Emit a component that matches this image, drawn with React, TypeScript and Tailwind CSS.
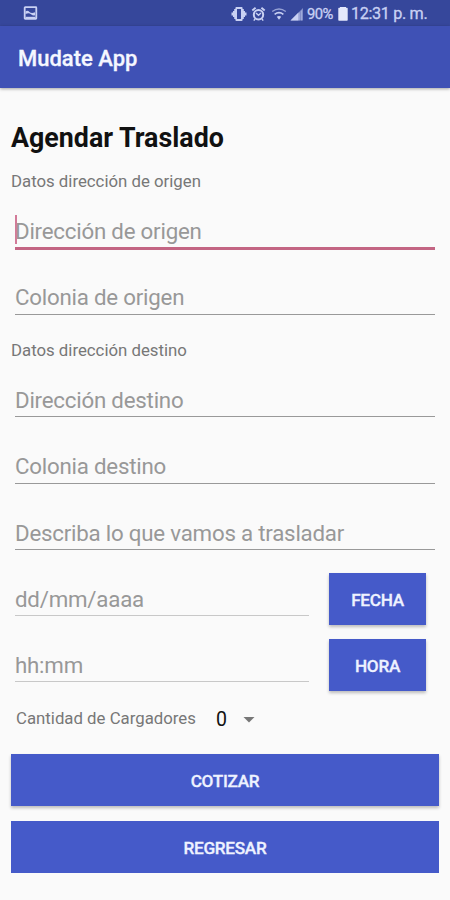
import type { ReactNode } from 'react';

function StatusBar() {
  return (
    <div className="flex h-[26px] items-center bg-[#36479b] pl-[23px] text-[#c9d1f3]">
      <svg width="15" height="14" viewBox="0 0 15 14" fill="none" stroke="currentColor">
        <rect x="1.7" y="1.2" width="11.6" height="11.6" rx="0.5" strokeWidth="1.8" />
        <path d="M2.500 5.500q2-1.500 4 .5t5.500.3v3q-2 .8-4-1T2.500 8Z" fill="currentColor" stroke="none" />
        <path d="M2.500 11.500h10" strokeWidth="1.4" />
      </svg>
      <svg className="mt-[1px] ml-[193px]" width="16" height="16" viewBox="0 0 16 16" fill="currentColor">
        <path fillRule="evenodd" d="M5.4 1h5.2q1 0 1 1v1h1.2v2H14v1.5h1.5v3H14V11h-1.2v2h-1.2v1q0 1-1 1H5.4q-1 0-1-1v-1H3.2v-2H2V9.500H.5v-3H2V5h1.200V3h1.200V2q0-1 1-1ZM6 3v10h4V3Z" />
      </svg>
      <svg className="mt-[1px] ml-[4px]" width="15" height="16" viewBox="0 0 15 16" fill="none" stroke="currentColor">
        <circle cx="7.500" cy="8.700" r="4.700" strokeWidth="2" />
        <path d="M1.300 4.500 4.600 1.700M13.700 4.500l-3.300-2.800" strokeWidth="1.900" />
        <path d="m5 7 2.500 2.200L10 7M4 13l-1.200 1.700M11 13l1.200 1.700" strokeWidth="1.400" />
      </svg>
      <svg className="mt-[2px] ml-[5px]" width="16" height="14" viewBox="0 0 16 14" fill="none" stroke="currentColor">
        <path d="M1.200 4.500q6.800-5 13.600 0" strokeWidth="1.500" opacity=".65" />
        <path d="M3.600 7.300q4.400-3.300 8.800 0" strokeWidth="1.600" />
        <path d="M5.800 9.800Q8 8.300 10.200 9.800L8 12.800Z" fill="currentColor" stroke="none" />
      </svg>
      <svg className="mt-[2px] ml-[3px]" width="14" height="14" viewBox="0 0 14 14" fill="currentColor">
        <path d="M.5 13.500 13 1v12.500Z" opacity=".5" />
        <path d="M.5 13.500 8.500 5.500v8Z" />
        <path d="M9.300 5.500v8M11.400 3.500v10" stroke="currentColor" strokeWidth=".7" opacity=".7" />
      </svg>
      <span className="mt-[2px] ml-[3px] w-[27px] whitespace-nowrap text-[14.8px] tracking-[-0.6px] [-webkit-text-stroke:0.3px]">90%</span>
      <svg className="mt-[2px] ml-[4px]" width="10" height="14" viewBox="0 0 10 15" preserveAspectRatio="none" fill="#e4e8fb">
        <path d="M2 0h6v.7h1q.7 0 .7.700v12.600q0 .7-.7.700H1q-.7 0-.7-.7V1.400q0-.7.700-.7h1Z" />
      </svg>
      <span className="mt-[2px] ml-[3px] whitespace-nowrap text-[16.2px] tracking-[-0.35px] [-webkit-text-stroke:0.3px]">12:31 p. m.</span>
    </div>
  );
}

type FieldProps = { hint: string; focused?: boolean; short?: boolean; raised?: boolean };

function Field({ hint, focused, short, raised }: FieldProps) {
  return (
    <div
      className={
        'ml-[4px] flex h-[34px] items-start text-[22.3px] leading-[34px] tracking-[-0.22px] whitespace-nowrap text-[#989898] ' +
        (short ? 'w-[294px]' : 'w-[420px]')
      }
    >
      <div
        className={
          'relative w-full ' +
          (focused
            ? 'h-[35px] border-b-[3px] border-[#c36583]'
            : short
              ? 'h-[34px] border-b border-[#c8c8c8]'
              : 'h-[34px] border-b border-[#999999]')
        }
      >
        {focused && <span className="absolute top-0 left-0 h-[29px] w-[2px] bg-[#d27a98]" />}
        <span className={focused || raised ? 'relative top-[-1px]' : ''}>{hint}</span>
      </div>
    </div>
  );
}

function Label({ children }: { children: ReactNode }) {
  return <p className="h-[22px] text-[16.8px] leading-[22px] whitespace-nowrap text-[#777777]">{children}</p>;
}

function Button({ children, wide, flat }: { children: ReactNode; wide?: boolean; flat?: boolean }) {
  return (
    <button
      className={
        'block h-[52px] bg-[#455ac9] pt-[3px] text-center text-[17.200px] font-medium tracking-[-0.3px] text-[#eef2ff] [-webkit-text-stroke:0.3px] ' +
        (wide ? 'w-[428px] ' : 'w-[97px] ') +
        (flat ? 'shadow-none' : 'shadow-[0_2px_3px_rgba(0,0,0,0.25)]')
      }
    >
      {children}
    </button>
  );
}

export default function App() {
  return (
    <div className="h-[900px] w-[450px] overflow-hidden bg-[#fafafa] font-[Roboto,sans-serif]">
      <StatusBar />
      <header className="flex h-[62px] items-center bg-[#3f51b5] pt-[2px] pl-[18px] text-[22px] font-medium text-[#f5f7ff] shadow-[0_1px_3px_rgba(0,0,0,0.35)] [-webkit-text-stroke:0.3px]">
        Mudate App
      </header>
      <main className="pt-[32px] pl-[11px]">
        <h1 className="h-[36px] text-[26.800px] leading-[36px] font-bold whitespace-nowrap text-[#111111]">Agendar Traslado</h1>
        <div className="mt-[14px]">
          <Label>Datos dirección de origen</Label>
        </div>
        <div className="mt-[23px] flex flex-col gap-[32px]">
          <Field hint="Dirección de origen" focused />
          <Field hint="Colonia de origen" raised />
        </div>
        <div className="mt-[24px]">
          <Label>Datos dirección destino</Label>
        </div>
        <div className="mt-[22px] flex flex-col gap-[32.500px]">
          <Field hint="Dirección destino" />
          <Field hint="Colonia destino" raised />
          <Field hint="Describa lo que vamos a trasladar" />
        </div>
        <div className="mt-[23px] flex flex-col gap-[14px]">
          <div className="flex h-[52px] items-start gap-[20px]">
            <div className="pt-[9px]">
              <Field hint="dd/mm/aaaa" short />
            </div>
            <Button>FECHA</Button>
          </div>
          <div className="flex h-[52px] items-start gap-[20px]">
            <div className="pt-[9px]">
              <Field hint="hh:mm" short />
            </div>
            <Button>HORA</Button>
          </div>
        </div>
        <div className="mt-[16px] flex h-[22px] items-center pl-[5px]">
          <div className="w-[200px]">
            <Label>Cantidad de Cargadores</Label>
          </div>
          <span className="mt-[3px] text-[19.5px] leading-[22px] text-[#111111]">0</span>
          <svg className="ml-[16px] mt-[3px]" width="12" height="6" viewBox="0 0 12 6" fill="#777777">
            <path d="M.5 0h11L6 5.500Z" />
          </svg>
        </div>
        <div className="mt-[25px] flex flex-col gap-[15px]">
          <Button wide>COTIZAR</Button>
          <Button wide flat>REGRESAR</Button>
        </div>
      </main>
    </div>
  );
}
